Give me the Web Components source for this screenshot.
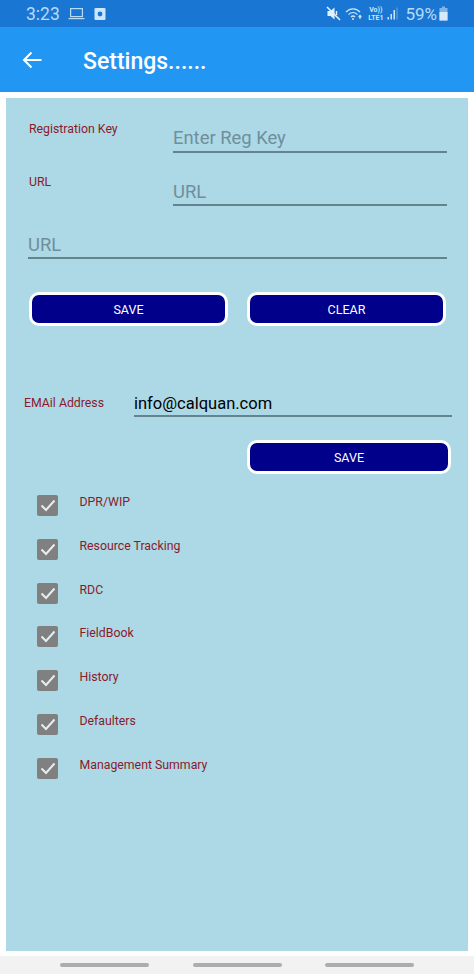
<!DOCTYPE html>
<html>
<head>
<meta charset="utf-8">
<title>Settings</title>
<style>
html, body { margin: 0; padding: 0; background: #fff; }
body { width: 474px; height: 974px; font-family: Roboto, "Liberation Sans", sans-serif; display: flex; flex-direction: column; overflow: hidden; }
settings-panel { flex: 1; }
</style>
</head>
<body>
<status-bar></status-bar>
<app-bar>Settings......</app-bar>
<settings-panel>
  <form-row style="--top:22px;--h:33px;--label-w:167px" label="Registration Key" placeholder="Enter Reg Key"></form-row>
  <form-row style="--top:20px;--h:33px;--label-w:167px;--input-pad:3px" label="URL" placeholder="URL"></form-row>
  <form-row style="--top:20px;--h:33px;--left:22px;--input-pad:3px" placeholder="URL"></form-row>
  <button-row style="--top:33px;--left:23px;--right:22px">
    <action-button>SAVE</action-button>
    <action-button>CLEAR</action-button>
  </button-row>
  <form-row style="--top:67px;--h:24px;--left:18px;--right:16px;--label-w:110px;--label-top:3px" label="EMAil Address" value="info@calquan.com"></form-row>
  <button-row style="--top:23px;--left:241px;--right:17px">
    <action-button>SAVE</action-button>
  </button-row>
  <check-list>
    <check-row>DPR/WIP</check-row>
    <check-row>Resource Tracking</check-row>
    <check-row>RDC</check-row>
    <check-row>FieldBook</check-row>
    <check-row>History</check-row>
    <check-row>Defaulters</check-row>
    <check-row>Management Summary</check-row>
  </check-list>
</settings-panel>
<nav-handles></nav-handles>

<script>
class StatusBar extends HTMLElement {
    constructor() {
        super();
        this.attachShadow({ mode: 'open' });
    }

    connectedCallback() {
        this.shadowRoot.innerHTML = `
            <style>
                :host { display: flex; align-items: center; height: 27px; background: #1976d2; color: #b6dcfa; font-family: Roboto, sans-serif; padding: 0 26px 0 26px; flex: none; }
                .time { font-size: 17.5px; margin-right: 8px; }
                svg { display: block; flex: none; }
                .left { display: flex; align-items: center; }
                .right { display: flex; align-items: center; margin-left: auto; }
                .pct { font-size: 17px; margin-left: 7px; margin-right: 2px; }
                .net { font-size: 7px; line-height: 8px; font-weight: 700; text-align: center; color: #cde6fb; margin: 0 4px 0 2px; }
            </style>
            <div class="left">
                <span class="time">3:23</span>
                <svg width="17" height="13" viewBox="0 0 17 13" fill="none" stroke="#b6dcfa" stroke-width="1.2" style="margin-right:9px"><rect x="2.6" y="1.6" width="11.8" height="8"/><path d="M0.5 11.6h16"/></svg>
                <svg width="12" height="14" viewBox="0 0 12 14"><rect x="0.5" y="1" width="11" height="12" rx="1" fill="#cde6fb"/><circle cx="6" cy="7" r="2.4" fill="#1976d2"/></svg>
            </div>
            <div class="right">
                <svg width="15" height="15" viewBox="0 0 15 15"><path d="M1.5 5h3l4-3.5v12l-4-3.5h-3z" fill="#e3f1fd"/><path d="M1 1l13 13" stroke="#e3f1fd" stroke-width="1.6"/><path d="M10.5 5v4" stroke="#e3f1fd" stroke-width="1.4"/></svg>
                <svg width="20" height="14" viewBox="0 0 20 14" fill="none" stroke="#cde6fb" stroke-width="1.2" style="margin:0 1px 0 4px"><path d="M1 5c4-4.2 10-4.2 14 0"/><path d="M3.5 7.6c2.700-2.800 6.300-2.800 9 0"/><path d="M6 10c1.200-1.200 2.800-1.200 4 0"/><circle cx="8" cy="12" r="1" fill="#cde6fb" stroke="none"/><path d="M15 12V8.500M13.600 10l1.400-1.500 1.400 1.500"/></svg>
                <div class="net">Vo))<br>LTE1</div>
                <svg width="11" height="13" viewBox="0 0 11 13"><path d="M0.500 10h1.500v2.500h-1.500zM3.500 7h1.500v5.500h-1.500zM6.500 3h1.500v9.500h-1.500z" fill="#cde6fb"/><path d="M10 0.500v12" stroke="#6fa9de" stroke-width="1"/></svg>
                <span class="pct">59%</span>
                <svg width="9" height="15" viewBox="0 0 9 15"><path d="M3 0.500h3v1.500h2.500v12.500h-8v-12.500h2.500z" fill="#7fb6e6"/><rect x="0.500" y="6" width="8" height="8.500" fill="#d6eafb"/></svg>
            </div>
        `;
    }
}

class AppBar extends HTMLElement {
    constructor() {
        super();
        this.attachShadow({ mode: 'open' });
    }

    connectedCallback() {
        this.shadowRoot.innerHTML = `
            <style>
                :host { display: flex; align-items: center; height: 65px; background: #2196f3; color: #fff; flex: none; padding-left: 22px; box-sizing: border-box; }
                svg { display: block; margin-right: 41px; }
                .title { font-family: Roboto, sans-serif; font-size: 23px; font-weight: 500; position: relative; top: 2px; }
            </style>
            <svg width="20" height="18" viewBox="0 0 20 18" fill="none" stroke="#fff" stroke-width="2"><path d="M19.500 9H2M9.500 1.500L2 9l7.500 7.500"/></svg>
            <span class="title"><slot></slot></span>
        `;
    }
}

class SettingsPanel extends HTMLElement {
    constructor() {
        super();
        this.attachShadow({ mode: 'open' });
    }

    connectedCallback() {
        this.shadowRoot.innerHTML = `
            <style>
                :host { display: flex; flex-direction: column; margin: 6px 6px 5px; background: #add8e6; min-height: 0; }
            </style>
            <slot></slot>
        `;
    }
}

class FormRow extends HTMLElement {
    constructor() {
        super();
        this.attachShadow({ mode: 'open' });
    }

    connectedCallback() {
        const label = this.getAttribute('label');
        const value = this.getAttribute('value');
        const text = value || this.getAttribute('placeholder');
        this.shadowRoot.innerHTML = `
            <style>
                :host { display: flex; margin-top: var(--top, 0); margin-left: var(--left, 0); margin-right: var(--right, 21px); height: var(--h, 32px); align-items: flex-start; font-family: Roboto, sans-serif; }
                .label { flex: none; width: var(--label-w, 167px); box-sizing: border-box; padding-left: 23px; padding-top: var(--label-top, 2px); font-size: 12.3px; line-height: 15px; color: #8b1a2a; }
                .label.email { padding-left: 0; }
                .input { flex: 1; height: 100%; box-sizing: border-box; border-bottom: 2px solid #64838f; font-size: 18.4px; line-height: 100%; color: #6f8f9b; display: flex; align-items: flex-end; padding-bottom: var(--input-pad, 4px); }
                .input.filled { color: #000; font-size: 16.5px; padding-bottom: 3px; }
            </style>
            ${label ? `<div class="label${value ? ' email' : ''}">${label}</div>` : ''}
            <div class="input${value ? ' filled' : ''}">${text}</div>
        `;
    }
}

class ButtonRow extends HTMLElement {
    constructor() {
        super();
        this.attachShadow({ mode: 'open' });
    }

    connectedCallback() {
        this.shadowRoot.innerHTML = `
            <style>
                :host { display: flex; gap: 19px; margin-top: var(--top, 0); margin-left: var(--left, 0); margin-right: var(--right, 0); }
            </style>
            <slot></slot>
        `;
    }
}

class ActionButton extends HTMLElement {
    constructor() {
        super();
        this.attachShadow({ mode: 'open' });
    }

    connectedCallback() {
        this.shadowRoot.innerHTML = `
            <style>
                :host { display: flex; flex: 1; height: 34px; box-sizing: border-box; align-items: center; justify-content: center; background: #00008b; border: 3px solid #fff; border-radius: 10px; color: #fff; font-family: Roboto, sans-serif; font-size: 12.5px; }
            </style>
            <slot></slot>
        `;
    }
}

class CheckList extends HTMLElement {
    constructor() {
        super();
        this.attachShadow({ mode: 'open' });
    }

    connectedCallback() {
        this.shadowRoot.innerHTML = `
            <style>
                :host { display: flex; flex-direction: column; gap: 22.800px; margin-top: 21px; padding-left: 31px; }
            </style>
            <slot></slot>
        `;
    }
}

class CheckRow extends HTMLElement {
    constructor() {
        super();
        this.attachShadow({ mode: 'open' });
    }

    connectedCallback() {
        this.shadowRoot.innerHTML = `
            <style>
                :host { display: flex; height: 21px; gap: 21.5px; font-family: Roboto, sans-serif; font-size: 12.3px; line-height: 15px; color: #8b1a2a; }
                .box { flex: none; width: 21px; height: 21px; border-radius: 2px; background: #808080; display: flex; align-items: center; justify-content: center; }
            </style>
            <div class="box">
                <svg width="16" height="13" viewBox="0 0 16 13" fill="none" stroke="#e4eef2" stroke-width="2"><path d="M1.500 6.500l4.500 4.500 8.500-9.500"/></svg>
            </div>
            <span class="text"><slot></slot></span>
        `;
    }
}

class NavHandles extends HTMLElement {
    constructor() {
        super();
        this.attachShadow({ mode: 'open' });
    }

    connectedCallback() {
        this.shadowRoot.innerHTML = `
            <style>
                :host { display: flex; flex: none; height: 18px; background: #f2f2f2; justify-content: center; gap: 43.500px; padding-top: 7px; box-sizing: border-box; }
                i { display: block; width: 89px; height: 4px; border-radius: 2px; background: #adadad; }
            </style>
            <i></i><i></i><i></i>
        `;
    }
}

customElements.define('status-bar', StatusBar);
customElements.define('app-bar', AppBar);
customElements.define('settings-panel', SettingsPanel);
customElements.define('form-row', FormRow);
customElements.define('button-row', ButtonRow);
customElements.define('action-button', ActionButton);
customElements.define('check-list', CheckList);
customElements.define('check-row', CheckRow);
customElements.define('nav-handles', NavHandles);
</script>
</body>
</html>
